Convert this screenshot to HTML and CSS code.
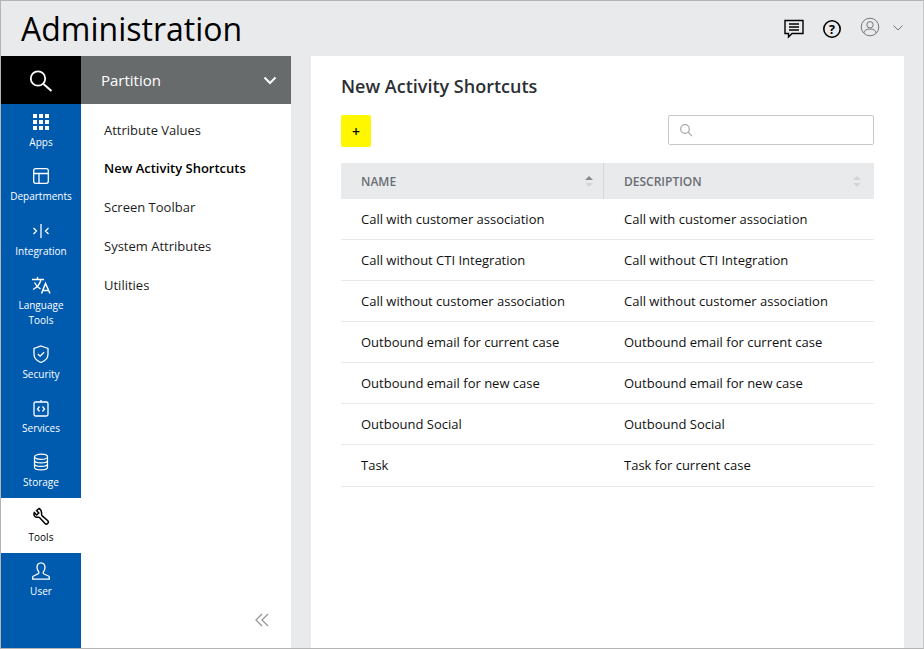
FILE: index.html
```html
<!DOCTYPE html>
<html lang="en">
<head>
<meta charset="utf-8">
<title>Administration</title>
<link rel="stylesheet" href="styles.css">
</head>
<body>
<div class="app">
  <header class="topbar">
    <h1 class="title">Administration</h1>
    <div class="top-icons">
      <svg class="ic-chat" width="22" height="22" viewBox="0 0 22 22" fill="none" stroke="#000" stroke-width="1.4"><path d="M2 2.500h18v13H9l-3.500 3.500v-3.500H2z"/><path d="M6 6h10M6 9h10M6 12h10"/></svg>
      <svg class="ic-help" width="20" height="20" viewBox="0 0 20 20"><circle cx="10" cy="10" r="8.200" fill="none" stroke="#000" stroke-width="1.600"/><text x="10" y="14.500" text-anchor="middle" class="help-q">?</text></svg>
      <svg class="ic-user" width="20" height="20" viewBox="0 0 20 20" fill="none" stroke="#77777b" stroke-width="1"><circle cx="10" cy="10" r="8.800"/><circle cx="10" cy="7.800" r="3.200"/><path d="M3.800 16c.5-3 3-4 6.200-4s5.700 1 6.200 4"/></svg>
      <svg class="ic-caret" width="12" height="8" viewBox="0 0 12 8" fill="none" stroke="#77777b" stroke-width="1"><path d="M1.500 1.500 6 6l4.500-4.500"/></svg>
    </div>
  </header>
  <div class="main">
    <nav class="rail">
      <div class="rail-search">
        <svg width="26" height="26" viewBox="0 0 26 26" fill="none" stroke="#fff"><circle cx="10" cy="11.500" r="7.200" stroke-width="1.800"/><path d="M15.500 17l8 7" stroke-width="2"/></svg>
      </div>
      <a class="rail-item">
        <svg width="18" height="18" viewBox="0 0 18 18" fill="#fff"><path d="M1 1h4v4H1zM7 1h4v4H7zM13 1h4v4h-4zM1 7h4v4H1zM7 7h4v4H7zM13 7h4v4h-4zM1 13h4v4H1zM7 13h4v4H7zM13 13h4v4h-4z"/></svg>
        <span>Apps</span>
      </a>
      <a class="rail-item">
        <svg width="18" height="18" viewBox="0 0 18 18" fill="none" stroke="#fff" stroke-width="1.300"><rect x="1.700" y="1.700" width="14.600" height="14.600" rx="2"/><path d="M1.700 6.500h14.600M7 6.500v9.800"/></svg>
        <span>Departments</span>
      </a>
      <a class="rail-item">
        <svg width="18" height="18" viewBox="0 0 18 18" fill="none" stroke="#fff" stroke-width="1.300"><path d="M1.500 6l3 3-3 3M16.500 6l-3 3 3 3"/><path d="M9 2v14"/></svg>
        <span>Integration</span>
      </a>
      <a class="rail-item two-line">
        <svg width="20" height="18" viewBox="0 0 20 18" fill="none" stroke="#fff" stroke-width="1.300"><path d="M1 3.500h12M6.500 1v2.500M10 3.500C9 8 6 11.500 2 13.500M3.500 6.500c1.500 3 3.500 5 6 6.500"/><path d="M10.500 17.500L14.500 7.500l4.500 10M12 14.500h6" stroke-width="1.500"/></svg>
        <span>Language<br>Tools</span>
      </a>
      <a class="rail-item">
        <svg width="18" height="18" viewBox="0 0 18 18" fill="none" stroke="#fff" stroke-width="1.300"><path d="M9 1l7 2.500v5.500c0 4-3 7-7 8.500-4-1.500-7-4.500-7-8.500V3.500z"/><path d="M5.800 9l2.300 2.200 4-4"/></svg>
        <span>Security</span>
      </a>
      <a class="rail-item">
        <svg width="18" height="18" viewBox="0 0 18 18" fill="none" stroke="#fff" stroke-width="1.300"><rect x="2" y="3" width="14" height="14" rx="1.500"/><path d="M9 3V1M7.500 7.500 5.500 10l2 2.500M10.500 7.500l2 2.500-2 2.500"/></svg>
        <span>Services</span>
      </a>
      <a class="rail-item storage">
        <svg width="18" height="18" viewBox="0 0 18 18" fill="none" stroke="#fff" stroke-width="1.200"><ellipse cx="9" cy="3.800" rx="6.500" ry="2.600"/><path d="M2.500 3.800v10.400c0 1.500 3 2.600 6.500 2.600s6.500-1.100 6.500-2.600V3.800M2.500 7.300c0 1.500 3 2.600 6.500 2.600s6.500-1.100 6.500-2.600M2.500 10.800c0 1.500 3 2.600 6.500 2.600s6.500-1.100 6.500-2.600"/></svg>
        <span>Storage</span>
      </a>
      <a class="rail-item active">
        <svg width="18" height="18" viewBox="0 0 18 18" fill="none" stroke="#000" stroke-width="1.500"><path d="M7 1.500 4.600 3.500 6.800 6 4.700 8 2.300 5.600C1.200 8.200 3 10.800 6 10.300c.7-.1 1.100-.2 1.500.2l5.500 6c1.700 1.700 4.500-1 2.800-2.800L10 8.600c-.4-.4-.5-1-.4-2.100C9.800 4 8.600 2.300 7 1.500z"/></svg>
        <span>Tools</span>
      </a>
      <a class="rail-item">
        <svg width="18" height="18" viewBox="0 0 18 18" fill="none" stroke="#fff" stroke-width="1.300"><path d="M9 .8c-2.600 0-4 2-4 4.500 0 2 1 3.700 1.800 4.700.3.700 0 1.500-.8 1.900L1.500 14c-.6.300-.8.900-.8 1.500v1.700h16.600v-1.700c0-.6-.2-1.200-.8-1.500L12 12c-.8-.4-1.100-1.200-.8-1.900.8-1 1.800-2.700 1.800-4.700C13 2.800 11.600.8 9 .8z"/></svg>
        <span>User</span>
      </a>
    </nav>
    <aside class="subnav">
      <div class="partition">
        <span>Partition</span>
        <svg width="14" height="9" viewBox="0 0 14 9" fill="none" stroke="#fff" stroke-width="2"><path d="M1.500 1.500 7 7l5.500-5.500"/></svg>
      </div>
      <ul class="menu">
        <li>Attribute Values</li>
        <li class="current">New Activity Shortcuts</li>
        <li>Screen Toolbar</li>
        <li>System Attributes</li>
        <li>Utilities</li>
      </ul>
      <div class="collapse">
        <svg width="14" height="14" viewBox="0 0 14 14" fill="none" stroke="#97979b" stroke-width="1.300"><path d="M7 1 1 7l6 6M13 1 7 7l6 6"/></svg>
      </div>
    </aside>
    <main class="content">
      <h2 class="page-title">New Activity Shortcuts</h2>
      <div class="toolbar">
        <button class="add" type="button">+</button>
        <div class="search">
          <svg width="14" height="14" viewBox="0 0 14 14" fill="none" stroke="#a8a8ac" stroke-width="1.200"><circle cx="6" cy="6" r="4.300"/><path d="M9 9.200l4 4"/></svg>
        </div>
      </div>
      <table class="grid">
        <thead>
          <tr>
            <th><div class="th-in">NAME<span class="sort up"></span></div></th>
            <th><div class="th-in">DESCRIPTION<span class="sort"></span></div></th>
          </tr>
        </thead>
        <tbody>
          <tr><td>Call with customer association</td><td>Call with customer association</td></tr>
          <tr><td>Call without CTI Integration</td><td>Call without CTI Integration</td></tr>
          <tr><td>Call without customer association</td><td>Call without customer association</td></tr>
          <tr><td>Outbound email for current case</td><td>Outbound email for current case</td></tr>
          <tr><td>Outbound email for new case</td><td>Outbound email for new case</td></tr>
          <tr><td>Outbound Social</td><td>Outbound Social</td></tr>
          <tr class="last"><td>Task</td><td>Task for current case</td></tr>
        </tbody>
      </table>
    </main>
  </div>
</div>
</body>
</html>
```

FILE: styles.css
```css
* { box-sizing: border-box; }
html, body { margin: 0; padding: 0; }
body { font-family: "Open Sans", sans-serif; color: #000; background: #e9eaec; text-rendering: optimizeLegibility; }
.app { width: 924px; height: 649px; border: 1px solid #b4b4b4; border-right-color: #c8c8c8; display: flex; flex-direction: column; background: #e9eaec; overflow: hidden; }
.topbar { height: 55px; flex: none; display: flex; align-items: center; justify-content: space-between; padding: 0 19px 0 20px; }
.title { margin: 0; font-size: 32px; font-weight: 400; line-height: 55px; }
.top-icons { display: flex; align-items: center; }
.ic-chat { margin-right: 17px; margin-top: 1px; }
.ic-help { margin-right: 18px; margin-top: 1px; }
.ic-user { margin-right: 12px; margin-top: -3px; }
.ic-caret { margin-top: -2px; }
.help-q { font-family: "Open Sans", sans-serif; font-size: 12.500px; font-weight: 700; fill: #000; }
.main { flex: 1; display: flex; min-height: 0; }
.rail { width: 80px; flex: none; background: #005baf; display: flex; flex-direction: column; }
.rail-search { height: 48px; flex: none; background: #000; display: flex; align-items: center; justify-content: center; }
.rail-item { display: flex; flex-direction: column; align-items: center; color: #fff; font-size: 10px; line-height: 15px; text-align: center; padding: 9px 0 8px; height: 54.300px; flex: none; }
.rail-item svg { display: block; flex: none; margin-bottom: 4px; }
.rail-item.two-line { height: 69px; }
.rail-item.storage { height: 53.300px; }
.rail-item.active { background: #fff; color: #000; height: 55px; }
.rail-item.active svg { margin-bottom: 5px; }
.subnav { width: 210px; flex: none; background: #fff; display: flex; flex-direction: column; }
.partition { height: 48px; flex: none; background: #676b6c; color: #fff; font-size: 15px; display: flex; align-items: center; justify-content: space-between; padding: 0 14px 0 20px; }
.menu { list-style: none; margin: 0; padding: 6.600px 0 0 23px; flex: 1; font-size: 13px; color: #1c1c1c; }
.menu li { height: 38.800px; line-height: 38.800px; }
.menu .current { font-weight: 600; color: #000; }
.collapse { flex: none; display: flex; justify-content: flex-end; padding: 0 22px 21px 0; }
.collapse svg { display: block; }
.content { width: 593px; flex: none; background: #fff; margin-left: 20px; padding: 17px 30px 0; }
.page-title { margin: 0; font-size: 18px; font-weight: 600; line-height: 27px; color: #2b2f33; }
.toolbar { display: flex; justify-content: space-between; align-items: flex-start; margin-top: 15px; height: 32px; }
.add { width: 30px; height: 32px; background: #fff700; border: 0; border-radius: 2px; padding: 0; font-family: "Open Sans", sans-serif; font-size: 14px; font-weight: 600; color: #000; }
.search { width: 206px; height: 30px; border: 1px solid #c8c8c8; border-radius: 2px; display: flex; align-items: center; padding-left: 10px; background: #fff; }
.grid { width: 533px; border-collapse: separate; border-spacing: 0; table-layout: fixed; margin-top: 16px; font-size: 13px; }
.grid th { height: 36px; background: #e9eaec; padding: 0; text-align: left; font-size: 12px; font-weight: 600; color: #6a6e73; }
.grid th:first-child { width: 263px; }
.th-in { height: 36px; display: flex; align-items: center; justify-content: space-between; padding: 0 13px 0 20px; }
.grid th:first-child .th-in { border-right: 1px solid #d6d7d9; padding-right: 10px; }
.sort { width: 8px; height: 11px; display: block; position: relative; }
.sort::before, .sort::after { content: ""; position: absolute; left: 0; border-left: 4px solid transparent; border-right: 4px solid transparent; }
.sort::before { top: 0; border-bottom: 4.500px solid #d3d4d6; }
.sort::after { bottom: 0; border-top: 4.500px solid #d3d4d6; }
.sort.up::before { border-bottom-color: #88898d; }
.grid td { height: 41px; padding: 0 0 1px 20px; border-bottom: 1px solid #e9eaec; color: #111; white-space: nowrap; }
.grid .last td { height: 42px; padding-bottom: 2px; }
```
